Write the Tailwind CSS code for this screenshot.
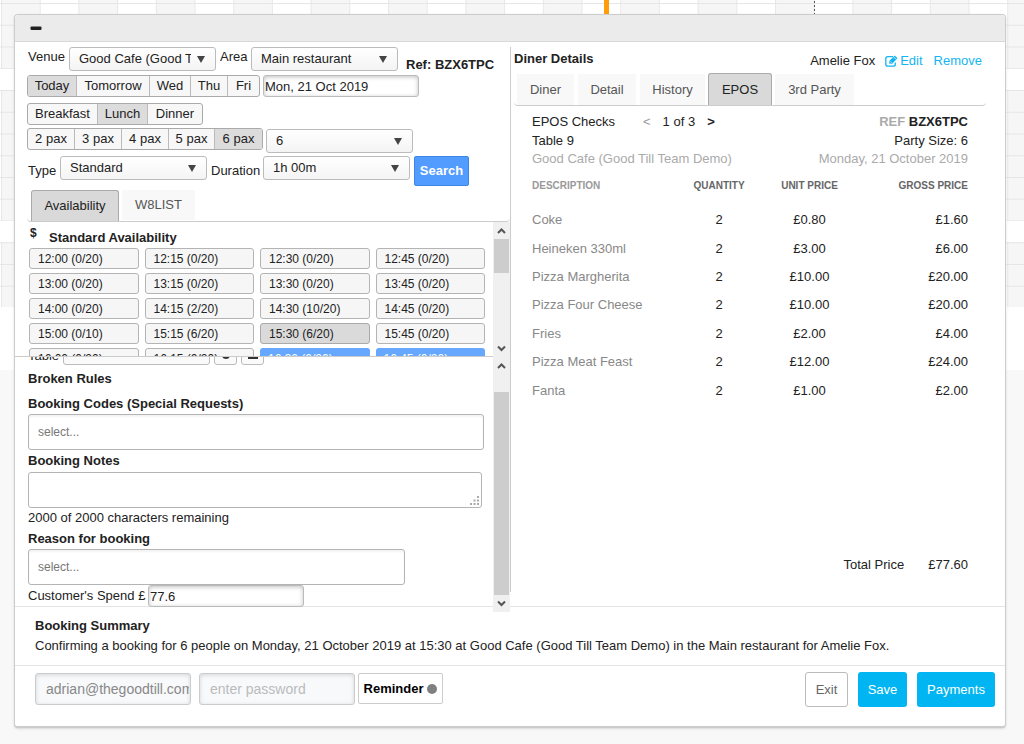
<!DOCTYPE html>
<html lang="en">
<head>
  <meta charset="utf-8">
  <meta name="viewport" content="width=device-width">
  <title>Booking</title>
  <script src="https://cdn.jsdelivr.net/npm/@tailwindcss/browser@4"></script>
</head>
<body class="relative min-h-screen bg-[#f8f8f8] font-['Liberation_Sans',Arial,sans-serif] text-[13px] leading-[18px] text-[#222]">

  <!-- Timetable behind the booking window -->
  <svg class="absolute inset-x-0 top-0 h-[370px] w-full" aria-hidden="true">
    <defs>
      <pattern id="cols" x="1" y="0" width="77.4" height="400" patternUnits="userSpaceOnUse">
        <rect width="38.7" height="400" fill="#f6f6f6"/>
        <path d="M.5 0v400M39.2 0v400" stroke="#e8e8e8"/>
      </pattern>
      <pattern id="lines" x="0" y="3" width="2000" height="21.75" patternUnits="userSpaceOnUse">
        <path d="M0 .5h2000" stroke="#e6e6e6"/>
      </pattern>
    </defs>
    <rect width="100%" height="370" fill="#fff"/>
    <rect width="100%" height="307" fill="url(#cols)"/>
    <rect width="100%" height="307" fill="url(#lines)"/>
    <rect y="69" width="100%" height="21" fill="#fff"/>
    <rect y="221" width="100%" height="21" fill="#fff"/>
    <rect x="604" width="5" height="14" fill="#ff9c0a"/>
    <path d="M814.5 1v13" stroke="#555" stroke-dasharray="2 2"/>
  </svg>

  <div class="relative pt-[14px] pr-[18px] pl-[14px]">
    <div class="rounded border border-b-2 border-[#ccc] bg-white shadow-sm">

      <div class="flex h-[27px] items-center rounded-t border-b border-[#d8d8d8] bg-[#ebebeb] px-[15px]">
        <button type="button" aria-label="Minimise" class="h-3 w-3">
          <svg viewBox="0 0 12 12" class="h-3 w-3"><rect x="0.5" y="4.5" width="11" height="3.5" rx="1" fill="#222"/></svg>
        </button>
      </div>

      <div class="flex">
        <!-- Booking -->
        <div class="w-1/2">
          <div class="flex flex-col pt-[5px] pl-3">
            <div class="flex h-6 items-start">
              <label for="venue" class="w-[42px] pt-px pl-px">Venue</label>
              <div class="grid w-[147px] grid-cols-1">
                <select id="venue" class="col-start-1 row-start-1 h-6 w-full min-w-0 appearance-none rounded-[3px] border border-[#bbb] bg-linear-to-b from-white to-[#f4f4f4] pr-6 pl-[9px]"><option>Good Cafe (Good Till Team Demo)</option></select>
                <svg viewBox="0 0 8 7" class="pointer-events-none col-start-1 row-start-1 mr-[11px] h-[7px] w-2 self-center justify-self-end" fill="#444"><path d="M0 0h8L4 7z"/></svg>
              </div>
              <label for="area" class="w-[35px] pt-px pl-1">Area</label>
              <div class="grid w-[147px] grid-cols-1">
                <select id="area" class="col-start-1 row-start-1 h-6 w-full min-w-0 appearance-none rounded-[3px] border border-[#bbb] bg-linear-to-b from-white to-[#f4f4f4] pr-6 pl-[9px]"><option>Main restaurant</option></select>
                <svg viewBox="0 0 8 7" class="pointer-events-none col-start-1 row-start-1 mr-[11px] h-[7px] w-2 self-center justify-self-end" fill="#444"><path d="M0 0h8L4 7z"/></svg>
              </div>
              <p class="pt-[9px] pl-2 font-bold">Ref: BZX6TPC</p>
            </div>

            <div class="mt-1 flex gap-[3px]">
              <div class="flex h-[22px] divide-x divide-[#bbb] overflow-hidden rounded-[3px] border border-[#aaa] bg-[#f7f7f7]">
                <button type="button" class="w-[49px] bg-[#dcdcdc]">Today</button>
                <button type="button" class="w-[73px]">Tomorrow</button>
                <button type="button" class="w-[41px]">Wed</button>
                <button type="button" class="w-[37px]">Thu</button>
                <button type="button" class="w-[31px]">Fri</button>
              </div>
              <input type="text" aria-label="Date" value="Mon, 21 Oct 2019" class="h-[22px] w-[156px] rounded-[3px] border border-[#bbb] px-px inset-shadow-[0_1px_4px] inset-shadow-black/25">
            </div>

            <div class="mt-[6px] flex">
              <div class="flex h-[22px] divide-x divide-[#bbb] overflow-hidden rounded-[3px] border border-[#aaa] bg-[#f7f7f7]">
                <button type="button" class="w-[70px]">Breakfast</button>
                <button type="button" class="w-[50px] bg-[#dcdcdc]">Lunch</button>
                <button type="button" class="w-[54px]">Dinner</button>
              </div>
            </div>

            <div class="mt-[3px] flex gap-[3px]">
              <div class="flex h-[22px] divide-x divide-[#bbb] overflow-hidden rounded-[3px] border border-[#aaa] bg-[#f7f7f7]">
                <button type="button" class="w-[47px]">2 pax</button>
                <button type="button" class="w-[47px]">3 pax</button>
                <button type="button" class="w-[47px]">4 pax</button>
                <button type="button" class="w-[46px]">5 pax</button>
                <button type="button" class="w-[47px] bg-[#dcdcdc]">6 pax</button>
              </div>
              <div class="mt-px grid w-[147px] grid-cols-1">
                <select aria-label="Party size" class="col-start-1 row-start-1 h-6 w-full min-w-0 appearance-none rounded-[3px] border border-[#bbb] bg-linear-to-b from-white to-[#f4f4f4] pr-6 pl-[9px]"><option>6</option></select>
                <svg viewBox="0 0 8 7" class="pointer-events-none col-start-1 row-start-1 mr-[11px] h-[7px] w-2 self-center justify-self-end" fill="#444"><path d="M0 0h8L4 7z"/></svg>
              </div>
            </div>

            <div class="mt-[3px] flex items-start">
              <label for="type" class="w-[33px] pt-1.5 pl-px">Type</label>
              <div class="grid w-[147px] grid-cols-1">
                <select id="type" class="col-start-1 row-start-1 h-6 w-full min-w-0 appearance-none rounded-[3px] border border-[#bbb] bg-linear-to-b from-white to-[#f4f4f4] pr-6 pl-[9px]"><option>Standard</option></select>
                <svg viewBox="0 0 8 7" class="pointer-events-none col-start-1 row-start-1 mr-[11px] h-[7px] w-2 self-center justify-self-end" fill="#444"><path d="M0 0h8L4 7z"/></svg>
              </div>
              <label for="duration" class="w-14 pt-1.5 pl-1">Duration</label>
              <div class="grid w-[147px] grid-cols-1">
                <select id="duration" class="col-start-1 row-start-1 h-6 w-full min-w-0 appearance-none rounded-[3px] border border-[#bbb] bg-linear-to-b from-white to-[#f4f4f4] pr-6 pl-[9px]"><option>1h 00m</option></select>
                <svg viewBox="0 0 8 7" class="pointer-events-none col-start-1 row-start-1 mr-[11px] h-[7px] w-2 self-center justify-self-end" fill="#444"><path d="M0 0h8L4 7z"/></svg>
              </div>
              <button type="button" class="ml-1 h-[30px] w-[55px] rounded-[2px] border border-[#3b86e8] bg-[#529bff] font-bold text-white">Search</button>
            </div>
          </div>

          <div class="mt-1 ml-3 flex gap-[3px] rounded-b border-b border-[#ccc] pl-1">
            <button type="button" class="h-[31px] w-[88px] rounded-t-[3px] border border-b-0 border-[#aaa] bg-[#d9d9d9]">Availability</button>
            <button type="button" class="h-[30px] w-[73px] bg-[#f8f8f8] text-[#555]">W8LIST</button>
          </div>

          <!-- Time slots -->
          <div class="flex h-[135px]">
            <div class="min-w-0 flex-1 overflow-hidden border-b border-[#ccc] pr-2 pl-[14px]">
              <div class="flex h-[26px] font-bold">
                <span class="w-5 pt-0.5 pl-px text-[12px]">$</span>
                <h2 class="pt-[7px]">Standard Availability</h2>
              </div>
              <div class="grid grid-cols-4 gap-x-[6px] gap-y-1 text-[12px]">
                <button type="button" class="h-[21px] rounded-[3px] border border-[#b4b4b4] bg-[#f6f6f6] px-2 text-left">12:00 (0/20)</button>
                <button type="button" class="h-[21px] rounded-[3px] border border-[#b4b4b4] bg-[#f6f6f6] px-2 text-left">12:15 (0/20)</button>
                <button type="button" class="h-[21px] rounded-[3px] border border-[#b4b4b4] bg-[#f6f6f6] px-2 text-left">12:30 (0/20)</button>
                <button type="button" class="h-[21px] rounded-[3px] border border-[#b4b4b4] bg-[#f6f6f6] px-2 text-left">12:45 (0/20)</button>
                <button type="button" class="h-[21px] rounded-[3px] border border-[#b4b4b4] bg-[#f6f6f6] px-2 text-left">13:00 (0/20)</button>
                <button type="button" class="h-[21px] rounded-[3px] border border-[#b4b4b4] bg-[#f6f6f6] px-2 text-left">13:15 (0/20)</button>
                <button type="button" class="h-[21px] rounded-[3px] border border-[#b4b4b4] bg-[#f6f6f6] px-2 text-left">13:30 (0/20)</button>
                <button type="button" class="h-[21px] rounded-[3px] border border-[#b4b4b4] bg-[#f6f6f6] px-2 text-left">13:45 (0/20)</button>
                <button type="button" class="h-[21px] rounded-[3px] border border-[#b4b4b4] bg-[#f6f6f6] px-2 text-left">14:00 (0/20)</button>
                <button type="button" class="h-[21px] rounded-[3px] border border-[#b4b4b4] bg-[#f6f6f6] px-2 text-left">14:15 (2/20)</button>
                <button type="button" class="h-[21px] rounded-[3px] border border-[#b4b4b4] bg-[#f6f6f6] px-2 text-left">14:30 (10/20)</button>
                <button type="button" class="h-[21px] rounded-[3px] border border-[#b4b4b4] bg-[#f6f6f6] px-2 text-left">14:45 (0/20)</button>
                <button type="button" class="h-[21px] rounded-[3px] border border-[#b4b4b4] bg-[#f6f6f6] px-2 text-left">15:00 (0/10)</button>
                <button type="button" class="h-[21px] rounded-[3px] border border-[#b4b4b4] bg-[#f6f6f6] px-2 text-left">15:15 (6/20)</button>
                <button type="button" class="h-[21px] rounded-[3px] border border-[#aaa] bg-[#dadada] px-2 text-left">15:30 (6/20)</button>
                <button type="button" class="h-[21px] rounded-[3px] border border-[#b4b4b4] bg-[#f6f6f6] px-2 text-left">15:45 (0/20)</button>
                <button type="button" class="h-[21px] rounded-[3px] border border-[#b4b4b4] bg-[#f6f6f6] px-2 text-left">16:00 (0/20)</button>
                <button type="button" class="h-[21px] rounded-[3px] border border-[#b4b4b4] bg-[#f6f6f6] px-2 text-left">16:15 (0/20)</button>
                <button type="button" class="h-[21px] rounded-[3px] bg-[#66a8ff] px-2 text-left text-white">16:30 (0/20)</button>
                <button type="button" class="h-[21px] rounded-[3px] bg-[#66a8ff] px-2 text-left text-white">16:45 (0/20)</button>
              </div>
            </div>
            <div class="flex w-[17px] flex-col bg-[#f0f0f0]" aria-hidden="true">
              <svg viewBox="0 0 17 17" class="h-[17px] w-[17px]" fill="none" stroke="#555" stroke-width="2"><path d="M5 11l3.5-3.5L12 11"/></svg>
              <div class="mx-px h-[34px] bg-[#cdcdcd]"></div>
              <svg viewBox="0 0 17 17" class="mt-auto h-[17px] w-[17px]" fill="none" stroke="#555" stroke-width="2"><path d="M5 6.5L8.5 10 12 6.5"/></svg>
            </div>
          </div>

          <!-- Booking details -->
          <div class="flex">
            <div class="flex min-w-0 flex-1 flex-col pl-[13px]">
              <div class="flex h-2 items-end overflow-hidden">
                <label for="table" class="w-[35px]">Table</label>
                <div class="grid w-[147px] grid-cols-1">
                  <select id="table" class="h-6 w-full appearance-none rounded-[3px] border border-[#bbb] bg-[#fafafa] px-[9px]"><option></option></select>
                </div>
                <button type="button" aria-label="Refresh tables" class="ml-1 grid h-6 w-[23px] justify-center rounded-[3px] border border-[#bbb] bg-[#fafafa] pt-[8px]"><svg viewBox="0 0 10 10" class="h-2.5 w-2.5" fill="none" stroke="#333" stroke-width="2"><path d="M8 5a3 3 0 1 1-3-3"/></svg></button>
                <button type="button" aria-label="Table plan" class="ml-1 grid h-6 w-[23px] justify-center rounded-[3px] border border-[#bbb] bg-[#fafafa] pt-[8px]"><svg viewBox="0 0 10 10" class="h-2.5 w-2.5" fill="#333"><path d="M1 0h8v2H1zM0 7h10v2H0z"/></svg></button>
              </div>
              <h3 class="mt-[5px] font-bold">Broken Rules</h3>
              <label for="codes" class="mt-[7px] font-bold">Booking Codes (Special Requests)</label>
              <input id="codes" type="text" placeholder="select..." class="mt-px mr-[9px] h-9 rounded-[3px] border border-[#b4b4b4] px-[9px] text-[12px] inset-shadow-[0_2px_2px] inset-shadow-black/5 placeholder:text-[#777]">
              <label for="notes" class="mt-[2px] font-bold">Booking Notes</label>
              <div class="mt-0.5 mr-[11px] grid">
                <textarea id="notes" class="col-start-1 row-start-1 h-9 resize-none rounded-[3px] border border-[#b4b4b4]"></textarea>
                <svg viewBox="0 0 9 9" class="pointer-events-none col-start-1 row-start-1 mr-[3px] mb-[3px] h-[9px] w-[9px] self-end justify-self-end" fill="#aaa"><path d="M7 0h2v2H7zM7 3.5h2v2H7zM3.5 3.5h2v2h-2zM7 7h2v2H7zM3.5 7h2v2h-2zM0 7h2v2H0z"/></svg>
              </div>
              <p class="mt-px">2000 of 2000 characters remaining</p>
              <label for="reason" class="mt-[3px] font-bold">Reason for booking</label>
              <input id="reason" type="text" placeholder="select..." class="mt-px mr-[88px] h-9 rounded-[3px] border border-[#b4b4b4] px-[9px] text-[12px] inset-shadow-[0_2px_2px] inset-shadow-black/5 placeholder:text-[#777]">
              <div class="-mb-px flex">
                <label for="spend" class="w-[120px] pt-0.5">Customer's Spend £</label>
                <input id="spend" type="text" value="77.6" class="h-[22px] w-[156px] rounded-[3px] border border-[#bbb] bg-white px-px inset-shadow-[0_1px_4px] inset-shadow-black/25">
              </div>
            </div>
            <div class="relative z-10 -mb-[6px] flex w-[17px] flex-col bg-[#f0f0f0]" aria-hidden="true">
              <svg viewBox="0 0 17 17" class="h-[17px] w-[17px]" fill="none" stroke="#555" stroke-width="2"><path d="M5 11l3.5-3.5L12 11"/></svg>
              <div class="mx-px mt-[18px] flex-1 bg-[#cdcdcd]"></div>
              <svg viewBox="0 0 17 17" class="h-[17px] w-[17px]" fill="none" stroke="#555" stroke-width="2"><path d="M5 6.5L8.5 10 12 6.5"/></svg>
            </div>
          </div>
        </div>

        <!-- Diner -->
        <div class="mt-[5px] mb-[14px] flex w-1/2 flex-col border-l border-[#ccc] pl-[3px]">
          <div class="flex pr-[23px]">
            <h2 class="pt-[3px] font-bold">Diner Details</h2>
            <span class="ml-auto pt-[5px]">Amelie Fox</span>
            <a href="#" class="ml-[10px] flex items-center gap-0.5 pt-[5px] text-[#13b5f0]">
              <svg viewBox="0 0 13 12" class="h-3 w-[13px]" fill="none" stroke="#13b5f0" stroke-width="1.3"><path d="M8 1.7H2.8Q.8 1.7.8 3.7v5.5q0 2 2 2h5.5q2 0 2-2V7.5"/><path d="M4.300 5.900L9.700.5l2.800 2.800-5.400 5.400H4.300z" fill="#13b5f0" stroke="none"/><path d="M5.300 6.600l1.200 1.200M8.900 2.200l2 2" stroke="#fff" stroke-width=".8"/></svg>
              Edit
            </a>
            <a href="#" class="ml-[11px] pt-[5px] text-[#13b5f0]">Remove</a>
          </div>
          <div class="mt-[3px] mr-[19px] flex items-end gap-1 rounded-b border-b border-[#ccc] pl-[3px] text-[#555]">
            <button type="button" class="h-[31px] w-[57px] bg-[#f8f8f8]">Diner</button>
            <button type="button" class="h-[31px] w-[58px] bg-[#f8f8f8]">Detail</button>
            <button type="button" class="h-[31px] w-[65px] bg-[#f8f8f8]">History</button>
            <button type="button" class="-ml-px h-8 w-16 rounded-t-[3px] border border-b-0 border-[#aaa] bg-[#d9d9d9] text-[#222]">EPOS</button>
            <button type="button" class="-ml-px h-[31px] w-[79px] bg-[#f8f8f8]">3rd Party</button>
          </div>

          <div class="pt-[6px] pr-[37px] pl-[18px]">
            <div class="flex leading-[19px]">
              <span class="w-[111px]">EPOS Checks</span>
              <button type="button" class="text-[#999]">&lt;</button>
              <span class="mx-3">1 of 3</span>
              <button type="button" class="font-bold">&gt;</button>
              <span class="ml-auto font-bold"><span class="text-[#aaa]">REF</span> BZX6TPC</span>
            </div>
            <div class="flex justify-between leading-[19px]"><span>Table 9</span><span>Party Size: 6</span></div>
            <div class="flex justify-between text-[#aaa]"><span>Good Cafe (Good Till Team Demo)</span><span>Monday, 21 October 2019</span></div>

            <table class="mt-0.5 h-[235px] w-full">
              <thead class="text-[10px] text-[#666]">
                <tr class="h-[36px] align-top">
                  <th class="pt-[7px] text-left text-[#999]">DESCRIPTION</th>
                  <th class="w-[90px] pt-[7px]">QUANTITY</th>
                  <th class="w-[91px] pt-[7px]">UNIT PRICE</th>
                  <th class="w-[113px] pt-[7px] text-right">GROSS PRICE</th>
                </tr>
              </thead>
              <tbody class="text-center">
                <tr><td class="text-left text-[#888]">Coke</td><td>2</td><td>£0.80</td><td class="text-right">£1.60</td></tr>
                <tr><td class="text-left text-[#888]">Heineken 330ml</td><td>2</td><td>£3.00</td><td class="text-right">£6.00</td></tr>
                <tr><td class="text-left text-[#888]">Pizza Margherita</td><td>2</td><td>£10.00</td><td class="text-right">£20.00</td></tr>
                <tr><td class="text-left text-[#888]">Pizza Four Cheese</td><td>2</td><td>£10.00</td><td class="text-right">£20.00</td></tr>
                <tr><td class="text-left text-[#888]">Fries</td><td>2</td><td>£2.00</td><td class="text-right">£4.00</td></tr>
                <tr><td class="text-left text-[#888]">Pizza Meat Feast</td><td>2</td><td>£12.00</td><td class="text-right">£24.00</td></tr>
                <tr><td class="text-left text-[#888]">Fanta</td><td>2</td><td>£1.00</td><td class="text-right">£2.00</td></tr>
              </tbody>
            </table>
          </div>
          <div class="mt-auto flex justify-end gap-6 pr-[37px] pb-[18px]"><span>Total Price</span><span>£77.60</span></div>
        </div>
      </div>

      <div class="h-[59px] border-t border-[#e4e4e4] pt-[9px] pl-5">
        <h2 class="leading-5 font-bold">Booking Summary</h2>
        <p class="leading-5">Confirming a booking for 6 people on Monday, 21 October 2019 at 15:30 at Good Cafe (Good Till Team Demo) in the Main restaurant for Amelie Fox.</p>
      </div>

      <div class="flex h-[61px] items-start border-t border-[#e4e4e4] pt-[6px] pr-[10px] pl-5 text-[14px]">
        <input type="text" aria-label="Username" value="adrian@thegoodtill.com" class="mt-px h-8 w-[156px] rounded-[3px] border border-[#ccc] bg-[#f8f9fb] pr-px pl-[10px] text-[#888] inset-shadow-[0_1px_4px] inset-shadow-black/15">
        <input type="password" aria-label="Password" placeholder="enter password" class="mt-px ml-2 h-8 w-[156px] rounded-[3px] border border-[#ccc] bg-[#f8f9fb] pl-[10px] inset-shadow-[0_1px_4px] inset-shadow-black/15 placeholder:text-[#bbb]">
        <button type="button" class="mt-px ml-[3px] flex h-[31px] w-[85px] items-center justify-center gap-1 rounded-[2px] border border-[#ccc] text-[13px] font-bold text-black">Reminder <span class="h-[10px] w-[10px] rounded-full bg-[#808080]"></span></button>
        <div class="ml-auto flex gap-[10px] text-[13px]">
          <button type="button" class="h-[35px] w-[43px] rounded-[3px] border border-[#bbb] text-[#666]">Exit</button>
          <button type="button" class="h-[35px] w-[49px] rounded-[3px] bg-[#00b5f1] text-white">Save</button>
          <button type="button" class="h-[35px] w-[78px] rounded-[3px] bg-[#00b5f1] text-white">Payments</button>
        </div>
      </div>
    </div>
  </div>
</body>
</html>
